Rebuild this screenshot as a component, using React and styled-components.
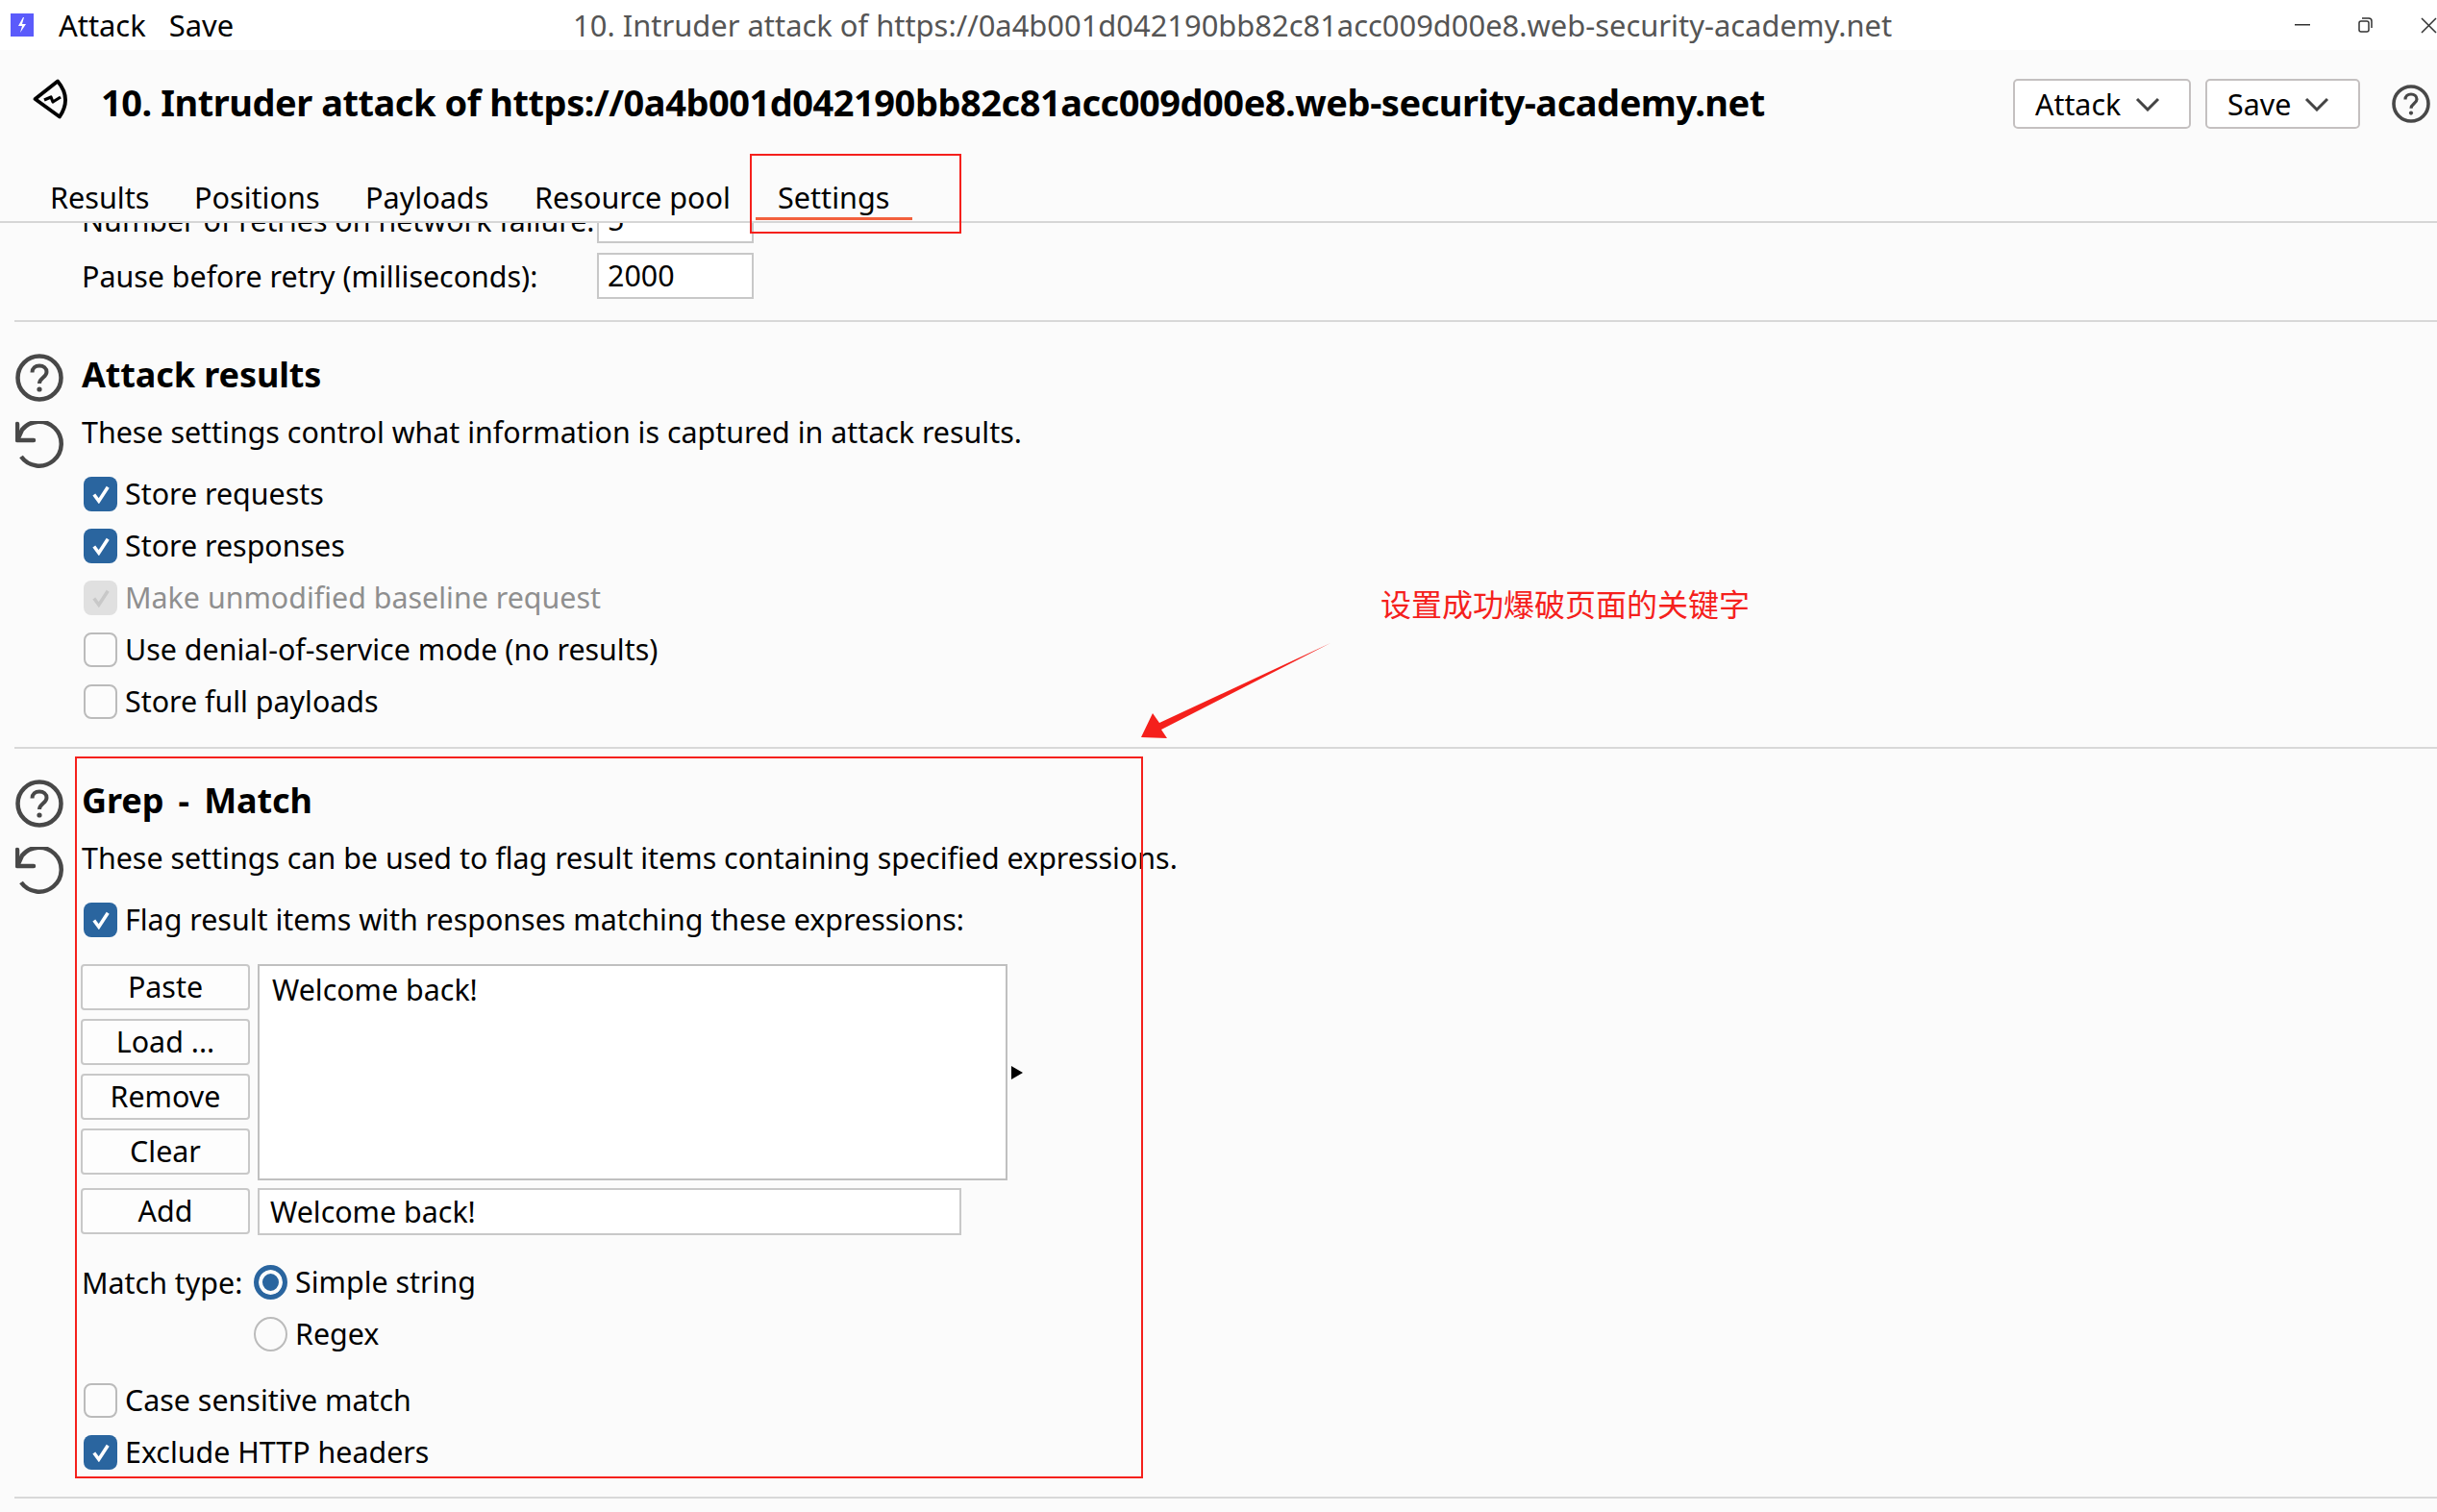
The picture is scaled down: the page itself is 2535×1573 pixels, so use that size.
import styled, { createGlobalStyle } from 'styled-components';

const GlobalStyle = createGlobalStyle`
  html, body {
    margin: 0;
    padding: 0;
    background: #fbfbfb;
  }
  * {
    box-sizing: border-box;
  }
`;

const Page = styled.div`
  position: relative;
  width: 2535px;
  height: 1573px;
  overflow: hidden;
  display: flex;
  flex-direction: column;
  background: #fbfbfb;
  color: #000;
  font-family: 'Noto Sans', 'Liberation Sans', sans-serif;
  font-size: 30.4px;
`;

/* window title bar */
const TitleBar = styled.div`
  position: relative;
  flex: none;
  height: 52px;
  display: flex;
  align-items: center;
  padding-left: 11px;
  background: #fff;
  font-size: 30.9px;
`;
const MenuItem = styled.span`
  margin-left: ${(p) => p.$gap}px;
  line-height: 52px;
`;
const WindowTitle = styled.span`
  margin-left: 353px;
  color: #555;
  white-space: nowrap;
`;
const WindowControls = styled.div`
  margin-left: auto;
  display: flex;
  align-items: center;
  gap: 50px;
`;

/* attack header */
const Header = styled.div`
  flex: none;
  height: 108px;
  display: flex;
  align-items: flex-start;
  padding: 30px 7px 0 34px;
`;
const AttackTitle = styled.h1`
  margin: -1px 0 0 33px;
  font-size: 38px;
  letter-spacing: -0.47px;
  line-height: 50px;
  font-weight: 700;
  white-space: nowrap;
`;
const HeaderActions = styled.div`
  margin-left: auto;
  display: flex;
  align-items: center;
  gap: 15px;
`;
const DropButton = styled.div`
  width: ${(p) => p.$width}px;
  height: 52px;
  display: flex;
  align-items: center;
  justify-content: space-between;
  padding: 0 30px 0 21px;
  background: #fff;
  border: 2px solid #c4c0c0;
  border-radius: 5px;
`;
const HeaderHelp = styled.div`
  display: flex;
  margin-left: 18px;
`;

/* tab strip */
const TabStrip = styled.div`
  flex: none;
  height: 72px;
  display: flex;
  padding-left: 52px;
  gap: 49px;
  border-bottom: 2px solid #d6d6d6;
  font-size: 30.6px;
`;
const Tab = styled.div`
  position: relative;
  width: ${(p) => p.$width}px;
  height: 70px;
  line-height: 90px;
  white-space: nowrap;
  ${(p) =>
    p.$active &&
    `
    &::after {
      content: '';
      position: absolute;
      left: -23px;
      bottom: 1px;
      width: 163px;
      height: 3px;
      background: #f2603c;
    }
  `}
`;

/* scrolled settings panel */
const Panel = styled.div`
  flex: 1;
  overflow: hidden;
  min-height: 0;
`;
const FieldRow = styled.div`
  height: 48px;
  margin: ${(p) => p.$top}px 0 0 85px;
  display: flex;
  align-items: center;
`;
const FieldLabel = styled.span`
  width: 536px;
  white-space: nowrap;
`;
const NumberBox = styled.div`
  width: 163px;
  height: 48px;
  line-height: 44px;
  padding-left: 9px;
  background: #fff;
  border: 2px solid #c8c8c8;
`;
const Divider = styled.div`
  height: 2px;
  margin: ${(p) => p.$top || 0}px 0 0 15px;
  background: #d8d8d8;
`;
const Section = styled.section`
  display: flex;
  padding: ${(p) => p.$top}px 0 ${(p) => p.$bottom}px 16px;
`;
const SideIcons = styled.div`
  flex: none;
  width: 69px;
  display: flex;
  flex-direction: column;
  gap: 20px;
`;
const SectionBody = styled.div`
  flex: 1;
  min-width: 0;
`;
const SectionTitle = styled.h2`
  margin: 0;
  font-size: 36px;
  letter-spacing: -0.1px;
  word-spacing: ${(p) => p.$wordGap || 0}px;
  line-height: 44px;
  font-weight: 700;
`;
const Description = styled.p`
  margin: 18px 0 26px;
  line-height: 40px;
  white-space: nowrap;
`;
const OptionList = styled.div`
  display: flex;
  flex-direction: column;
  gap: 18px;
  margin-top: ${(p) => p.$top || 0}px;
`;
const Option = styled.label`
  height: 36px;
  display: flex;
  align-items: center;
  gap: 8px;
  padding-left: 2px;
  line-height: 36px;
  white-space: nowrap;
  color: ${(p) => (p.$muted ? '#8f8f8f' : '#000')};
`;
const Box = styled.span`
  flex: none;
  width: 35px;
  height: 36px;
  display: flex;
  align-items: center;
  justify-content: center;
  border-radius: 8px;
  background: ${(p) => (p.$muted ? '#e0e0e0' : p.$checked ? '#2a659f' : '#fcfcfc')};
  border: ${(p) => (p.$checked || p.$muted ? 'none' : '2px solid #bbb')};
`;
const Round = styled.span`
  flex: none;
  width: 35px;
  height: 36px;
  border-radius: 50%;
  background: ${(p) => (p.$checked ? '#2a659f' : 'transparent')};
  border: ${(p) => (p.$checked ? '5px solid #2a659f' : '2px solid #bbb')};
  box-shadow: ${(p) => (p.$checked ? 'inset 0 0 0 4px #fcfcfc' : 'none')};
`;

/* grep list editor */
const Editor = styled.div`
  display: grid;
  grid-template-columns: 176px 780px 12px;
  column-gap: 8px;
  margin: 28px 0 0 -1px;
  width: fit-content;
`;
const ButtonStack = styled.div`
  display: flex;
  flex-direction: column;
  gap: 9px;
`;
const PlainButton = styled.div`
  height: 48px;
  line-height: 44px;
  text-align: center;
  background: #fdfdfd;
  border: 2px solid #c8c8c8;
  border-radius: 4px;
`;
const ListBox = styled.div`
  height: 225px;
  padding: 5px 13px;
  line-height: 40px;
  background: #fff;
  border: 2px solid #c0c0c0;
`;
const Caret = styled.span`
  align-self: center;
  margin-left: -4px;
  width: 0;
  height: 0;
  border-left: 12px solid #000;
  border-top: 7px solid transparent;
  border-bottom: 7px solid transparent;
`;
const AddRow = styled.div`
  display: grid;
  grid-template-columns: 176px 732px;
  column-gap: 8px;
  margin: 8px 0 0 -1px;
`;
const TextInput = styled.div`
  height: 49px;
  line-height: 45px;
  padding-left: 11px;
  background: #fff;
  border: 2px solid #c8c8c8;
`;
const MatchType = styled.div`
  display: flex;
  margin-top: 31px;
`;
const MatchLabel = styled.span`
  width: 177px;
  line-height: 38px;
  white-space: nowrap;
`;

/* red marks drawn over the screenshot */
const MarkBox = styled.div`
  position: absolute;
  left: ${(p) => p.$x}px;
  top: ${(p) => p.$y}px;
  width: ${(p) => p.$w}px;
  height: ${(p) => p.$h}px;
  border: 2px solid #f5201c;
  pointer-events: none;
`;
const MarkText = styled.div`
  position: absolute;
  left: 1436px;
  top: 605px;
  font-family: 'Noto Sans CJK SC', sans-serif;
  font-size: 32px;
  line-height: 44px;
  color: #f5201c;
  white-space: nowrap;
`;
const MarkArrow = styled.svg`
  position: absolute;
  left: 1180px;
  top: 660px;
`;

const Minimize = () => (
  <svg width="16" height="2" viewBox="0 0 16 2">
    <rect width="16" height="1.5" fill="#333" />
  </svg>
);
const Restore = () => (
  <svg width="15" height="16" viewBox="0 0 15 16" fill="none" stroke="#333" strokeWidth="1.5">
    <rect x="1" y="4" width="10" height="11" rx="2" />
    <path d="M4 1h7a3 3 0 0 1 3 3v7" />
  </svg>
);
const Close = () => (
  <svg width="17" height="17" viewBox="0 0 17 17" fill="none" stroke="#333" strokeWidth="1.5">
    <path d="M1 1l15 15M16 1L1 16" />
  </svg>
);
const AppIcon = () => (
  <svg width="24" height="24" viewBox="0 0 24 24">
    <rect width="24" height="24" fill="#5b5bfb" />
    <path d="M13 4L8 13h4l-2 7 6-9h-4l2-7z" fill="#fff" />
  </svg>
);
const IntruderIcon = () => (
  <svg width="38" height="42" viewBox="0 0 38 42" fill="none" stroke="#000" strokeLinejoin="round">
    <path d="M2.500 21L26 2.500q15 18 2 37z" strokeWidth="3.800" />
    <path d="M12 22l7-3 2 5 8-5" strokeWidth="3.200" />
  </svg>
);
const Chevron = () => (
  <svg width="26" height="15" viewBox="0 0 26 15" fill="none" stroke="#444" strokeWidth="3">
    <path d="M2 2l11 11L24 2" />
  </svg>
);
const HelpIcon = ({ size = 50 }) => (
  <svg width={size} height={size} viewBox="0 0 50 50" fill="none" stroke="#484848" strokeWidth="4.500">
    <circle cx="25" cy="25" r="22.500" />
    <path d="M17.500 19.500c0-4.500 3.300-7 7.500-7s7.500 2.600 7.500 6.500c0 5.500-7.500 6-7.500 12" strokeWidth="4" />
    <circle cx="25" cy="37" r="2.600" fill="#484848" stroke="none" />
  </svg>
);
const ResetIcon = () => (
  <svg width="50" height="50" viewBox="0 0 50 50" fill="none" stroke="#484848" strokeWidth="4.500">
    <path d="M6 37A23 23 0 1 0 7 9L2 20" />
    <path d="M2 3v17h17" strokeLinecap="round" strokeLinejoin="round" />
  </svg>
);
const Tick = ({ color = '#fff' }) => (
  <svg width="20" height="20" viewBox="0 0 18 18" fill="none" stroke={color} strokeWidth="3.200">
    <path d="M2.500 9.500l4.500 6L15.500 2.500" />
  </svg>
);

const CheckOption = ({ label, checked, muted }) => (
  <Option $muted={muted}>
    <Box $checked={checked} $muted={muted}>
      {checked && <Tick color={muted ? '#c8c8c8' : '#fff'} />}
    </Box>
    {label}
  </Option>
);

const SECTION_ICONS = (
  <SideIcons>
    <HelpIcon />
    <ResetIcon />
  </SideIcons>
);

export default function App() {
  return (
    <>
      <GlobalStyle />
      <Page>
        <TitleBar>
          <AppIcon />
          <MenuItem $gap={26}>Attack</MenuItem>
          <MenuItem $gap={24}>Save</MenuItem>
          <WindowTitle>10. Intruder attack of https://0a4b001d042190bb82c81acc009d00e8.web-security-academy.net</WindowTitle>
          <WindowControls>
            <Minimize />
            <Restore />
            <Close />
          </WindowControls>
        </TitleBar>

        <Header>
          <IntruderIcon />
          <AttackTitle>10. Intruder attack of https://0a4b001d042190bb82c81acc009d00e8.web-security-academy.net</AttackTitle>
          <HeaderActions>
            <DropButton $width={185}>
              Attack
              <Chevron />
            </DropButton>
            <DropButton $width={161}>
              Save
              <Chevron />
            </DropButton>
            <HeaderHelp>
              <HelpIcon size={40} />
            </HeaderHelp>
          </HeaderActions>
        </Header>

        <TabStrip>
          <Tab $width={101}>Results</Tab>
          <Tab $width={129}>Positions</Tab>
          <Tab $width={127}>Payloads</Tab>
          <Tab $width={204}>Resource pool</Tab>
          <Tab $width={114} $active>
            Settings
          </Tab>
        </TabStrip>

        <Panel>
          <FieldRow $top={-27}>
            <FieldLabel>Number of retries on network failure:</FieldLabel>
            <NumberBox>5</NumberBox>
          </FieldRow>
          <FieldRow $top={10}>
            <FieldLabel>Pause before retry (milliseconds):</FieldLabel>
            <NumberBox>2000</NumberBox>
          </FieldRow>
          <Divider $top={22} />

          <Section $top={33} $bottom={29}>
            {SECTION_ICONS}
            <SectionBody>
              <SectionTitle>Attack results</SectionTitle>
              <Description>These settings control what information is captured in attack results.</Description>
              <OptionList>
                <CheckOption label="Store requests" checked />
                <CheckOption label="Store responses" checked />
                <CheckOption label="Make unmodified baseline request" checked muted />
                <CheckOption label="Use denial-of-service mode (no results)" />
                <CheckOption label="Store full payloads" />
              </OptionList>
            </SectionBody>
          </Section>
          <Divider />

          <Section $top={32} $bottom={28}>
            {SECTION_ICONS}
            <SectionBody>
              <SectionTitle $wordGap={6}>Grep - Match</SectionTitle>
              <Description>These settings can be used to flag result items containing specified expressions.</Description>
              <CheckOption label="Flag result items with responses matching these expressions:" checked />
              <Editor>
                <ButtonStack>
                  <PlainButton>Paste</PlainButton>
                  <PlainButton>Load ...</PlainButton>
                  <PlainButton>Remove</PlainButton>
                  <PlainButton>Clear</PlainButton>
                </ButtonStack>
                <ListBox>Welcome back!</ListBox>
                <Caret />
              </Editor>
              <AddRow>
                <PlainButton>Add</PlainButton>
                <TextInput>Welcome back!</TextInput>
              </AddRow>
              <MatchType>
                <MatchLabel>Match type:</MatchLabel>
                <OptionList>
                  <Option>
                    <Round $checked />
                    Simple string
                  </Option>
                  <Option>
                    <Round />
                    Regex
                  </Option>
                </OptionList>
              </MatchType>
              <OptionList $top={33}>
                <CheckOption label="Case sensitive match" />
                <CheckOption label="Exclude HTTP headers" checked />
              </OptionList>
            </SectionBody>
          </Section>
          <Divider />
        </Panel>

        <MarkBox $x={780} $y={160} $w={220} $h={83} />
        <MarkBox $x={78} $y={787} $w={1111} $h={751} />
        <MarkText>设置成功爆破页面的关键字</MarkText>
        <MarkArrow width="215" height="115" viewBox="0 0 215 115">
          <path d="M204 9L26 92l-7-10-12 25 27 1-6-9z" fill="#f5201c" />
        </MarkArrow>
      </Page>
    </>
  );
}
